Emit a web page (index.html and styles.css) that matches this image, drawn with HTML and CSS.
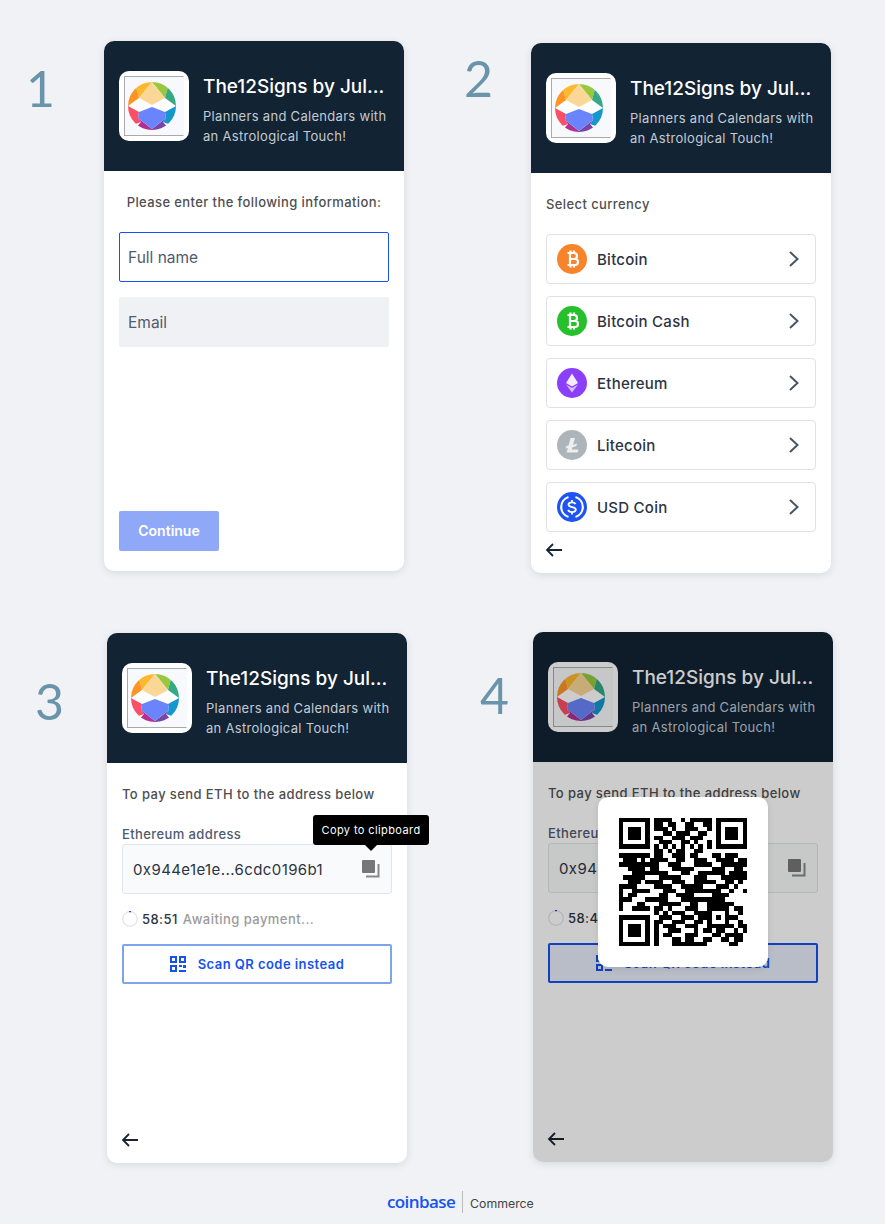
FILE: index.html
```html
<!DOCTYPE html>
<html lang="en">
<head>
    <meta charset="UTF-8">
    <meta name="viewport" content="width=device-width, initial-scale=1.0">
    <title>Coinbase Commerce checkout steps</title>
    <link rel="stylesheet" href="styles.css">
</head>
<body>

    <!-- shared icons -->
    <svg class="defs" aria-hidden="true">
        <defs>
            <clipPath id="logoClip"><circle cx="24" cy="24" r="24"/></clipPath>
        </defs>
        <symbol id="logo" viewBox="0 0 48 48">
            <g clip-path="url(#logoClip)">
                <rect width="48" height="48" fill="#fff"/>
                <polygon points="24,0 11,16 8,5 14,-2" fill="#fdb92e"/>
                <polygon points="8,5 11,16 0,24 -4,20 -2,5" fill="#fd9526"/>
                <polygon points="24,0 37,16 40,5 34,-2" fill="#97c83f"/>
                <polygon points="40,5 37,16 48,24 52,20 50,5" fill="#35a884"/>
                <polygon points="0,24 11,30 10,36 13,40 2,44 -4,30" fill="#fb4f66"/>
                <polygon points="10,36 24,47 24,52 6,48 13,40" fill="#b52f92"/>
                <polygon points="48,24 37,30 38,36 35,40 46,44 52,30" fill="#1596cc"/>
                <polygon points="38,36 24,47 24,52 42,48 35,40" fill="#7a45a4"/>
                <polygon points="24,0 37,16 24,23 11,16" fill="#fad796"/>
                <polygon points="24,25 37,30 38,36 24,47 10,36 11,30" fill="#6a84fb"/>
            </g>
        </symbol>
        <symbol id="chevron" viewBox="0 0 14 18">
            <path d="M3 2l7.500 7L3 16" fill="none" stroke="#4a5568" stroke-width="2"/>
        </symbol>
        <symbol id="back" viewBox="0 0 18 14">
            <path d="M17 7H2M8 1L2 7l6 6" fill="none" stroke="#1a2433" stroke-width="1.800"/>
        </symbol>
        <symbol id="copy" viewBox="0 0 18 18">
            <rect x="0" y="0" width="13" height="13" rx="1" fill="#777"/>
            <path d="M16.500 4v12.500H4" fill="none" stroke="#888" stroke-width="2"/>
        </symbol>
        <symbol id="spin" viewBox="0 0 16 16">
            <circle cx="8" cy="8" r="7.300" fill="none" stroke="#dfe2e8" stroke-width="1.200"/>
            <path d="M7 .7h2" fill="none" stroke="#1652f0" stroke-width="1.200"/>
        </symbol>
        <symbol id="scan" viewBox="0 0 16 16">
            <path d="M0 0h7v7H0zM2 2v3h3V2zM9 0h7v7H9zM11 2v3h3V2zM0 9h7v7H0zM2 11v3h3v-3z" fill="#1652f0" fill-rule="evenodd"/>
            <path d="M9 9h3v2H9zM13 9h3v3h-3zM9 14h7v2H9z" fill="#1652f0"/>
        </symbol>
        <symbol id="btc" viewBox="0 0 30 30">
            <circle cx="15" cy="15" r="15" fill="currentColor"/>
            <path d="M10.500 9H17a3 3 0 0 1 0 6h-4M13 9v12M13 15h5a3 3 0 0 1 0 6h-7.500M13.500 6.500V9M17 6.500V9M13.500 21v2.500M17 21v2.500" fill="none" stroke="#fff" stroke-width="2.200"/>
        </symbol>
        <symbol id="eth" viewBox="0 0 30 30">
            <circle cx="15" cy="15" r="15" fill="#8c3ffb"/>
            <polygon points="15,5.500 21,15 15,18.500 9,15" fill="#f4ecff"/>
            <polygon points="9,16.500 15,20 21,16.500 15,24.500" fill="#d9c0fd"/>
        </symbol>
        <symbol id="ltc" viewBox="0 0 30 30">
            <circle cx="15" cy="15" r="15" fill="#aeb5ba"/>
            <polygon points="13.500,8 18,8 16,15 20,13.500 19.300,16 15.300,17.500 14.700,19.500 21.500,19.500 20.500,22.500 9.500,22.500 11,17.800 8.500,18.700 9.200,16.300 11.700,15.300" fill="#eceeef"/>
        </symbol>
        <symbol id="usdc" viewBox="0 0 30 30">
            <circle cx="15" cy="15" r="15" fill="#1d54f2"/>
            <path d="M11.500 5a10.500 10.500 0 0 0 0 20M18.500 5a10.500 10.500 0 0 1 0 20" fill="none" stroke="#fff" stroke-width="2.200"/>
            <path d="M18.500 12.200c-.5-1.200-1.800-1.900-3.500-1.900-2 0-3.500 1-3.500 2.400 0 3.400 7.300 1.500 7.300 4.900 0 1.500-1.600 2.500-3.800 2.500-1.900 0-3.400-.8-3.900-2.200M15 8v2.300M15 20.400v2" fill="none" stroke="#fff" stroke-width="1.800"/>
        </symbol>
    </svg>

    <div class="board">

        <section class="step step-1">
            <div class="step-num">1</div>
            <div class="card">
                <header class="card-head">
                    <div class="shop-logo"><div class="shop-logo-inner"><svg class="shop-logo-img"><use href="#logo"/></svg></div></div>
                    <div class="shop-info">
                        <h2 class="shop-name">The12Signs by Jul...</h2>
                        <p class="shop-desc">Planners and Calendars with an Astrological Touch!</p>
                    </div>
                </header>
                <div class="card-body">
                    <p class="lead lead-center">Please enter the following information:</p>
                    <input class="text-input text-input-active" type="text" placeholder="Full name">
                    <input class="text-input" type="text" placeholder="Email">
                    <button class="continue-btn">Continue</button>
                </div>
            </div>
        </section>

        <section class="step step-2">
            <div class="step-num">2</div>
            <div class="card">
                <header class="card-head">
                    <div class="shop-logo"><div class="shop-logo-inner"><svg class="shop-logo-img"><use href="#logo"/></svg></div></div>
                    <div class="shop-info">
                        <h2 class="shop-name">The12Signs by Jul...</h2>
                        <p class="shop-desc">Planners and Calendars with an Astrological Touch!</p>
                    </div>
                </header>
                <div class="card-body">
                    <p class="lead">Select currency</p>
                    <ul class="coin-list">
                        <li class="coin-row"><svg class="coin-icon coin-btc"><use href="#btc"/></svg><span class="coin-name">Bitcoin</span><svg class="chevron"><use href="#chevron"/></svg></li>
                        <li class="coin-row"><svg class="coin-icon coin-bch"><use href="#btc"/></svg><span class="coin-name">Bitcoin Cash</span><svg class="chevron"><use href="#chevron"/></svg></li>
                        <li class="coin-row"><svg class="coin-icon"><use href="#eth"/></svg><span class="coin-name">Ethereum</span><svg class="chevron"><use href="#chevron"/></svg></li>
                        <li class="coin-row"><svg class="coin-icon"><use href="#ltc"/></svg><span class="coin-name">Litecoin</span><svg class="chevron"><use href="#chevron"/></svg></li>
                        <li class="coin-row"><svg class="coin-icon"><use href="#usdc"/></svg><span class="coin-name">USD Coin</span><svg class="chevron"><use href="#chevron"/></svg></li>
                    </ul>
                    <svg class="back-arrow back-arrow-close"><use href="#back"/></svg>
                </div>
            </div>
        </section>

        <section class="step step-3">
            <div class="step-num">3</div>
            <div class="card">
                <header class="card-head">
                    <div class="shop-logo"><div class="shop-logo-inner"><svg class="shop-logo-img"><use href="#logo"/></svg></div></div>
                    <div class="shop-info">
                        <h2 class="shop-name">The12Signs by Jul...</h2>
                        <p class="shop-desc">Planners and Calendars with an Astrological Touch!</p>
                    </div>
                </header>
                <div class="card-body">
                    <p class="lead">To pay send ETH to the address below</p>
                    <div class="field-label">Ethereum address</div>
                    <div class="address-box">
                        <span class="address">0x944e1e1e...6cdc0196b1</span>
                        <svg class="copy-icon"><use href="#copy"/></svg>
                        <div class="tooltip">Copy to clipboard</div>
                    </div>
                    <div class="timer">
                        <svg class="spinner"><use href="#spin"/></svg>
                        <span class="timer-time">58:51</span>
                        <span class="timer-note">Awaiting payment...</span>
                    </div>
                    <button class="scan-btn"><svg class="scan-icon"><use href="#scan"/></svg>Scan QR code instead</button>
                    <svg class="back-arrow"><use href="#back"/></svg>
                </div>
            </div>
        </section>

        <section class="step step-4">
            <div class="step-num">4</div>
            <div class="card">
                <header class="card-head">
                    <div class="shop-logo"><div class="shop-logo-inner"><svg class="shop-logo-img"><use href="#logo"/></svg></div></div>
                    <div class="shop-info">
                        <h2 class="shop-name">The12Signs by Jul...</h2>
                        <p class="shop-desc">Planners and Calendars with an Astrological Touch!</p>
                    </div>
                </header>
                <div class="card-body">
                    <p class="lead">To pay send ETH to the address below</p>
                    <div class="field-label">Ethereum address</div>
                    <div class="address-box">
                        <span class="address">0x944e1e1e...6cdc0196b1</span>
                        <svg class="copy-icon"><use href="#copy"/></svg>
                    </div>
                    <div class="timer">
                        <svg class="spinner"><use href="#spin"/></svg>
                        <span class="timer-time">58:47</span>
                        <span class="timer-note">Awaiting payment...</span>
                    </div>
                    <button class="scan-btn scan-btn-focus"><svg class="scan-icon"><use href="#scan"/></svg>Scan QR code instead</button>
                    <svg class="back-arrow"><use href="#back"/></svg>
                </div>
                <div class="overlay"></div>
                <div class="qr-modal"><svg id="qrCode" class="qr-code" viewBox="0 0 29 29" shape-rendering="crispEdges"></svg></div>
            </div>
        </section>

    </div>

    <footer class="brand">
        <span class="brand-coinbase">coinbase</span>
        <span class="brand-commerce">Commerce</span>
    </footer>

    <script src="qr.js"></script>
</body>
</html>
```

FILE: styles.css
```css
* {
    box-sizing: border-box;
}
body {
    font-family: Inter, "Liberation Sans", sans-serif;
    margin: 0;
    padding: 0;
    background-color: #f0f2f6;
}
.defs {
    display: block;
    width: 0;
    height: 0;
}
.board {
    display: grid;
    grid-template-columns: 440px 445px;
}
.step {
    display: flex;
    align-items: flex-start;
}
.step-num {
    font-family: Lato, sans-serif;
    font-size: 50px;
    line-height: 60px;
    color: #6a94a9;
}
.step-1 { padding-top: 41px; }
.step-1 .step-num { margin: 17px 0 0 26px; width: 78px; }
.step-2 { padding-top: 43px; }
.step-2 .step-num { margin: 5px 0 0 24px; width: 67px; }
.step-3 { padding-top: 60px; }
.step-3 .step-num { margin: 38px 0 0 35px; width: 72px; }
.step-4 { padding-top: 59px; }
.step-4 .step-num { margin: 33px 0 0 40px; width: 53px; }

.card {
    position: relative;
    display: flex;
    flex-direction: column;
    width: 300px;
    height: 530px;
    border-radius: 10px;
    background: #fff;
    box-shadow: 0 2px 8px rgba(0, 0, 0, 0.1);
}
.card-head {
    display: flex;
    gap: 14px;
    height: 130px;
    padding: 30px 15px;
    border-radius: 10px 10px 0 0;
    background-color: #122334;
}
.shop-logo {
    flex: none;
    width: 70px;
    height: 70px;
    padding: 5px;
    border-radius: 10px;
    background: #fff;
}
.shop-logo-inner {
    display: flex;
    align-items: center;
    justify-content: center;
    width: 60px;
    height: 60px;
    background: #f8f9fc;
    border: 1px solid #aaa;
    border-right-color: #f8f9fc;
}
.shop-logo-img {
    width: 48px;
    height: 48px;
    margin: 0 4px 1px 0;
}
.shop-info {
    min-width: 0;
    padding-top: 3px;
}
.shop-name {
    margin: 0 0 6px;
    font-size: 19px;
    line-height: 26px;
    font-weight: 500;
    color: #fff;
    white-space: nowrap;
}
.shop-desc {
    margin: 0;
    font-size: 13px;
    line-height: 20px;
    letter-spacing: 0.3px;
    color: #c4cad2;
}
.card-body {
    display: flex;
    flex-direction: column;
    flex: 1;
    padding: 21px 15px 15px;
}
.lead {
    margin: 0;
    font-size: 13px;
    line-height: 20px;
    font-weight: 500;
    letter-spacing: 0.4px;
    color: #4f4f4f;
}
.lead-center {
    text-align: center;
}
.text-input {
    width: 270px;
    height: 50px;
    margin: 15px 0 0;
    padding: 0 8px;
    border: 1px solid #f0f1f5;
    border-radius: 2px;
    background: #f0f1f5;
    font-family: inherit;
    font-size: 15.5px;
}
.text-input::placeholder {
    color: #4f5b6e;
    opacity: 1;
}
.text-input-active {
    margin-top: 20px;
    border-color: #1652f0;
    background: #fff;
}
.continue-btn {
    width: 100px;
    height: 40px;
    margin-top: auto;
    margin-bottom: 5px;
    padding: 0 0 2px;
    border: 0;
    border-radius: 2px;
    background-color: #8fa9f8;
    color: #fff;
    font-family: inherit;
    font-size: 14px;
    font-weight: 600;
}
.coin-list {
    display: flex;
    flex-direction: column;
    gap: 12px;
    margin: 20px 0 0;
    padding: 0;
    list-style: none;
}
.coin-row {
    display: flex;
    align-items: center;
    height: 50px;
    padding: 0 14px 0 10px;
    border: 1px solid #dfe1e5;
    border-radius: 4px;
}
.coin-icon {
    flex: none;
    width: 30px;
    height: 30px;
    margin-right: 10px;
}
.coin-btc { color: #f7842a; }
.coin-bch { color: #25c02b; }
.coin-name {
    flex: 1;
    font-size: 15px;
    font-weight: 500;
    letter-spacing: 0.25px;
    color: #2c3442;
}
.chevron {
    flex: none;
    width: 14px;
    height: 18px;
}
.back-arrow {
    flex: none;
    width: 18px;
    height: 14px;
    margin-top: auto;
    margin-bottom: 1px;
    margin-left: -1px;
}
.back-arrow-close {
    margin-top: 11px;
}
.field-label {
    margin-top: 20px;
    font-size: 13px;
    line-height: 20px;
    font-weight: 500;
    letter-spacing: 0.4px;
    color: #4f5b6e;
}
.address-box {
    position: relative;
    display: flex;
    align-items: center;
    justify-content: space-between;
    height: 50px;
    padding: 0 11px 0 10px;
    border: 1px solid #e2e4e8;
    border-radius: 3px;
    background: #f9fafb;
}
.address {
    font-size: 15px;
    letter-spacing: 0.4px;
    color: #2c3442;
}
.copy-icon {
    width: 18px;
    height: 18px;
}
.tooltip {
    position: absolute;
    top: -30px;
    left: 190px;
    width: 116px;
    height: 30px;
    border-radius: 3px;
    background: #000;
    color: #fff;
    font-size: 11px;
    line-height: 30px;
    letter-spacing: 0.4px;
    text-align: center;
}
.tooltip::after {
    content: "";
    position: absolute;
    top: 30px;
    left: 52px;
    border: 6px solid transparent;
    border-top-color: #000;
    border-bottom: 0;
}
.timer {
    display: flex;
    align-items: center;
    height: 20px;
    margin-top: 15px;
    font-size: 13px;
    font-weight: 500;
    letter-spacing: 0.45px;
}
.spinner {
    width: 16px;
    height: 16px;
    margin-right: 4px;
}
.timer-time {
    color: #2c3442;
    margin-right: 5px;
}
.timer-note {
    color: #9b9b9b;
}
.scan-btn {
    display: flex;
    align-items: center;
    justify-content: center;
    gap: 12px;
    height: 40px;
    margin-top: 15px;
    border: 2px solid #7da5ec;
    border-radius: 2px;
    background: #fff;
    color: #1652f0;
    font-family: inherit;
    font-size: 13px;
    font-weight: 600;
    letter-spacing: 0.45px;
}
.scan-btn-focus {
    border-color: #1652f0;
    background: #e6edfa;
}
.scan-icon {
    width: 16px;
    height: 16px;
}
.overlay {
    position: absolute;
    inset: 0;
    border-radius: 10px;
    background: rgba(0, 0, 0, 0.2);
}
.qr-modal {
    position: absolute;
    top: 165px;
    left: 65px;
    width: 170px;
    height: 170px;
    padding: 21px;
    border-radius: 10px;
    background: #fff;
    box-shadow: 0 2px 6px rgba(0, 0, 0, 0.1);
}
.qr-code {
    display: block;
    width: 128px;
    height: 128px;
}
.brand {
    display: flex;
    align-items: center;
    height: 22px;
    margin-top: 28px;
    padding-left: 387px;
}
.brand-coinbase {
    padding-right: 7px;
    border-right: 1px solid #bbb;
    font-family: "Open Sans", sans-serif;
    font-size: 17px;
    line-height: 22px;
    font-weight: 600;
    letter-spacing: -0.6px;
    color: #1652f0;
}
.brand-commerce {
    padding: 2px 0 0 7px;
    font-size: 12.3px;
    color: #444;
}
```

FILE: qr.js
```js
// QR matrix, one string per row
const rows = [
    "11111110111100101111101111111",
    "10000010110110011001101000001",
    "10111010111010011100101011101",
    "10111010001101110011001011101",
    "10111010110011101110001011101",
    "10000010011100110100101000001",
    "11111110101010101010101111111",
    "00000000110101100110000000000",
    "11111110110011101100011011100",
    "01110101111001100111001111011",
    "11111111100111000111100111111",
    "00111101100011111000011100110",
    "00011111111000110011111101111",
    "01111100011111000111000111111",
    "00111011110011100111110011010",
    "11110000111100111110001110100",
    "10011110001110011111111001001",
    "10110000011001111000011110000",
    "11100011111000111111111100000",
    "10001100011111001100111111000",
    "10011110110100011100111110110",
    "00000000101011100111100010010",
    "11111110011100111011101011100",
    "10000010110011100110100010010",
    "10111010101110011100111111011",
    "10111010100111000101101100101",
    "10111010101100011100011011110",
    "10000010100011011001100110110",
    "11111110100011111111000001100"
];

let d = "";
rows.forEach((row, y) => {
    for (let x = 0; x < row.length; x++) {
        if (row[x] === "1") {
            d += `M${x} ${y}h1v1h-1z`;
        }
    }
});

let path = document.createElementNS("http://www.w3.org/2000/svg", "path");
path.setAttribute("d", d);
document.getElementById("qrCode").appendChild(path);
```
